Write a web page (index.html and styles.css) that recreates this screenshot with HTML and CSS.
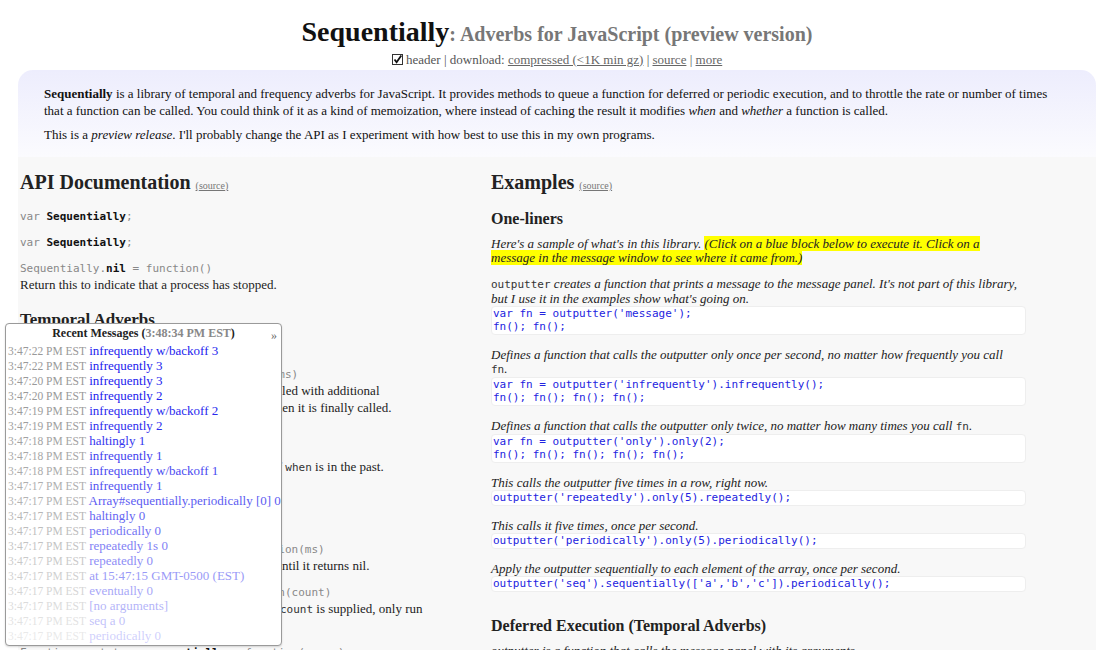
FILE: index.html
```html
<!DOCTYPE html>
<html>
<head>
<meta charset="utf-8">
<title>Sequentially: Adverbs for JavaScript</title>
<link rel="stylesheet" href="styles.css">
</head>
<body>
<div class="page">
  <header class="top">
    <h1><span class="name">Sequentially</span><span class="tag">: Adverbs for JavaScript (preview version)</span></h1>
    <div class="nav">
      <svg class="check" width="11" height="11" viewBox="0 0 11 11"><rect x="0.5" y="0.5" width="10" height="10" fill="#fff" stroke="#333"/><path d="M2.5 5.5 L4.6 8.3 L9.3 1.5" fill="none" stroke="#111" stroke-width="1.8"/></svg>
      header | download: <a href="#">compressed (&lt;1K min gz)</a> | <a href="#">source</a> | <a href="#">more</a>
    </div>
  </header>

  <section class="intro">
    <p><b>Sequentially</b> is a library of temporal and frequency adverbs for JavaScript. It provides methods to queue a function for deferred or periodic execution, and to throttle the rate or number of times that a function can be called. You could think of it as a kind of memoization, where instead of caching the result it modifies <i>when</i> and <i>whether</i> a function is called.</p>
    <p>This is a <i>preview release</i>. I'll probably change the API as I experiment with how best to use this in my own programs.</p>
  </section>

  <main class="content">
    <div class="col api">
      <h2>API Documentation <a class="src" href="#">(source)</a></h2>
      <div class="item"><div class="sig"><span class="kw">var</span> <b>Sequentially</b>;</div></div>
      <div class="item"><div class="sig"><span class="kw">var</span> <b>Sequentially</b>;</div></div>
      <div class="item"><div class="sig">Sequentially.<b>nil</b> = function()</div><div class="desc">Return this to indicate that a process has stopped.</div></div>
      <h3>Temporal Adverbs</h3>
      <div class="item"><div class="desc">Methods on <code>Function.prototype</code>:</div></div>
      <div class="item"><div class="sig">Function.prototype.<b>delayFor</b> = function(ms)</div><div class="desc">Call this function, after <code>ms</code> milliseconds. If it is called with additional<br>arguments, these will be passed to the function when it is finally called.</div></div>
      <div class="item"><div class="sig">Function.prototype.<b>at</b> = function(when)</div><div class="desc">Call this function at the <code>Date</code> given,<br>or on the next cycle of the JavaScript event loop if <code>when</code> is in the past.</div></div>
      <div class="item wide"><div class="sig">Function.prototype.<b>defer</b> = function()</div><div class="desc">Call this function after the current event.</div></div>
      <div class="item"><div class="sig">Function.prototype.<b>periodically</b> = function(ms)</div><div class="desc">Call this function once in every <code>ms</code> milliseconds, until it returns nil.</div></div>
      <div class="item"><div class="sig">Function.prototype.<b>repeatedly</b> = function(count)</div><div class="desc">Call this function repeatedly until it returns nil. If <code>count</code> is supplied, only run<br>it at most <code>count</code> times.</div></div>
      <div class="item"><div class="sig">Function.prototype.<b>sequentially</b> = function(array)</div><div class="desc">Apply this function to each element of the array in turn.</div></div>
    </div>

    <div class="col examples">
      <h2>Examples <a class="src" href="#">(source)</a></h2>
      <h3>One-liners</h3>
      <p class="note">Here's a sample of what's in this library. <span class="hl">(Click on a blue block below to execute it. Click on a message in the message window to see where it came from.)</span></p>
      <div class="ex">
        <p class="note"><code>outputter</code> creates a function that prints a message to the message panel. It's not part of this library, but I use it in the examples show what's going on.</p>
        <pre class="code">var fn = outputter('message');
fn(); fn();</pre>
      </div>
      <div class="ex">
        <p class="note">Defines a function that calls the outputter only once per second, no matter how frequently you call <code>fn</code>.</p>
        <pre class="code">var fn = outputter('infrequently').infrequently();
fn(); fn(); fn(); fn();</pre>
      </div>
      <div class="ex">
        <p class="note">Defines a function that calls the outputter only twice, no matter how many times you call <code>fn</code>.</p>
        <pre class="code">var fn = outputter('only').only(2);
fn(); fn(); fn(); fn(); fn();</pre>
      </div>
      <div class="ex">
        <p class="note">This calls the outputter five times in a row, right now.</p>
        <pre class="code">outputter('repeatedly').only(5).repeatedly();</pre>
      </div>
      <div class="ex">
        <p class="note">This calls it five times, once per second.</p>
        <pre class="code">outputter('periodically').only(5).periodically();</pre>
      </div>
      <div class="ex">
        <p class="note">Apply the outputter sequentially to each element of the array, once per second.</p>
        <pre class="code">outputter('seq').sequentially(['a','b','c']).periodically();</pre>
      </div>
      <h3 class="section">Deferred Execution (Temporal Adverbs)</h3>
      <p class="note">outputter is a function that calls the message panel with its arguments.</p>
    </div>
  </main>
</div>

<aside class="messages">
  <div class="msg-title"><b>Recent Messages</b> <b>(<span class="now">3:48:34 PM EST</span>)</b><span class="more">»</span></div>
  <ul class="msg-list">
    <li style="opacity:1"><span class="ts">3:47:22 PM EST</span> <span class="m">infrequently w/backoff 3</span></li>
    <li style="opacity:1"><span class="ts">3:47:22 PM EST</span> <span class="m">infrequently 3</span></li>
    <li style="opacity:1"><span class="ts">3:47:20 PM EST</span> <span class="m">infrequently 3</span></li>
    <li style="opacity:1"><span class="ts">3:47:20 PM EST</span> <span class="m">infrequently 2</span></li>
    <li style="opacity:0.97"><span class="ts">3:47:19 PM EST</span> <span class="m">infrequently w/backoff 2</span></li>
    <li style="opacity:0.94"><span class="ts">3:47:19 PM EST</span> <span class="m">infrequently 2</span></li>
    <li style="opacity:0.9"><span class="ts">3:47:18 PM EST</span> <span class="m">haltingly 1</span></li>
    <li style="opacity:0.86"><span class="ts">3:47:18 PM EST</span> <span class="m">infrequently 1</span></li>
    <li style="opacity:0.82"><span class="ts">3:47:18 PM EST</span> <span class="m">infrequently w/backoff 1</span></li>
    <li style="opacity:0.78"><span class="ts">3:47:17 PM EST</span> <span class="m">infrequently 1</span></li>
    <li style="opacity:0.74"><span class="ts">3:47:17 PM EST</span> <span class="m">Array#sequentially.periodically [0] 0</span></li>
    <li style="opacity:0.7"><span class="ts">3:47:17 PM EST</span> <span class="m">haltingly 0</span></li>
    <li style="opacity:0.64"><span class="ts">3:47:17 PM EST</span> <span class="m">periodically 0</span></li>
    <li style="opacity:0.58"><span class="ts">3:47:17 PM EST</span> <span class="m">repeatedly 1s 0</span></li>
    <li style="opacity:0.52"><span class="ts">3:47:17 PM EST</span> <span class="m">repeatedly 0</span></li>
    <li style="opacity:0.46"><span class="ts">3:47:17 PM EST</span> <span class="m">at 15:47:15 GMT-0500 (EST)</span></li>
    <li style="opacity:0.4"><span class="ts">3:47:17 PM EST</span> <span class="m">eventually 0</span></li>
    <li style="opacity:0.34"><span class="ts">3:47:17 PM EST</span> <span class="m">[no arguments]</span></li>
    <li style="opacity:0.28"><span class="ts">3:47:17 PM EST</span> <span class="m">seq a 0</span></li>
    <li style="opacity:0.22"><span class="ts">3:47:17 PM EST</span> <span class="m">periodically 0</span></li>
  </ul>
</aside>
</body>
</html>
```

FILE: styles.css
```css
body {
  margin: 0;
  background: #fff;
  color: #222;
  font-family: "Liberation Serif", "Times New Roman", serif;
  font-size: 13px;
}

.page {
  padding: 0 17px 0 18px;
}

a {
  color: #777;
}

code, .sig, .code {
  font-family: "DejaVu Sans Mono", monospace;
  font-size: 11px;
}

/* header */
.top {
  height: 70px;
  box-sizing: border-box;
  padding-top: 16px;
  text-align: center;
}

h1 {
  margin: 0;
  font-size: 28px;
  line-height: 32px;
}

.name {
  color: #111;
}

.tag {
  color: #777;
  font-size: 20px;
}

.nav {
  color: #555;
  font-size: 13px;
  line-height: 16px;
  margin-top: 2px;
}

.nav a {
  color: #666;
}

.check {
  vertical-align: -1px;
}

/* intro */
.intro {
  background: linear-gradient(#ededfd, #fbfbfe);
  border-radius: 15px 15px 0 0;
  padding: 15px 40px 7px 26px;
}

.intro p {
  margin: 0 0 7px;
  line-height: 17px;
  color: #111;
}

/* content */
.content {
  background: #f8f8f8;
  display: grid;
  grid-template-columns: 451px 535px;
  column-gap: 20px;
  padding: 0 2px 40px;
}

h2 {
  margin: 13px 0 11px;
  font-size: 20px;
  line-height: 24px;
  color: #222;
}

h2 .src {
  font-size: 10px;
  font-weight: normal;
  color: #777;
}

h3 {
  margin: 17px 0 10px;
  font-size: 17px;
  line-height: 20px;
  color: #222;
}

.item {
  margin-bottom: 10px;
}

.item.wide {
  margin-bottom: 24px;
}

.sig {
  line-height: 16px;
  color: #888;
}

.sig b {
  color: #111;
}

.sig .kw {
  color: #888;
}

.desc {
  line-height: 16px;
  margin-bottom: 4px;
  color: #222;
}

.desc code {
  color: #333;
}

.examples h3 {
  margin: 0 0 8px;
  font-size: 16px;
}

.examples h3.section {
  margin-top: 24px;
}

.note {
  margin: 0;
  padding-right: 6px;
  font-style: italic;
  line-height: 14px;
  color: #222;
}

.note code {
  font-style: normal;
  color: #333;
}

.hl {
  background: #ffff00;
}

.examples > .note {
  margin-bottom: 12px;
}

.ex {
  margin-bottom: 13px;
}

.code {
  margin: 0;
  padding: 0 1px 1px;
  background: #fff;
  border: 1px solid #eeeeee;
  border-radius: 4px;
  color: #2323e0;
  line-height: 13px;
}

/* messages panel */
.messages {
  position: absolute;
  left: 5px;
  top: 323px;
  width: 275px;
  height: 321px;
  background: #fff;
  border: 1px solid #9a9a9a;
  border-radius: 4px;
  box-shadow: 0 1px 2px rgba(0, 0, 0, 0.15);
  overflow: hidden;
}

.msg-title {
  position: relative;
  text-align: center;
  font-size: 12px;
  line-height: 16px;
  padding-top: 1px;
  color: #222;
}

.msg-title .now {
  color: #888;
}

.more {
  position: absolute;
  right: 4px;
  top: 3px;
  color: #666;
  font-size: 12px;
}

.msg-list {
  list-style: none;
  margin: 2px 0 0;
  padding: 0 0 0 2px;
}

.msg-list li {
  font-size: 13px;
  line-height: 15px;
  height: 15px;
  white-space: nowrap;
}

.msg-list li span {
  line-height: 12px;
}

.ts {
  color: #999;
  font-size: 11.5px;
}

.m {
  color: #2222ee;
  font-size: 13px;
}
```
